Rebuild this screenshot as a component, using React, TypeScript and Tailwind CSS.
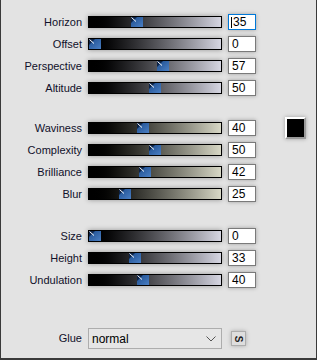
import React from "react";

type Row = { label: string; value: number };

const groupA: Row[] = [
  { label: "Horizon", value: 35 },
  { label: "Offset", value: 0 },
  { label: "Perspective", value: 57 },
  { label: "Altitude", value: 50 },
];

const groupB: Row[] = [
  { label: "Waviness", value: 40 },
  { label: "Complexity", value: 50 },
  { label: "Brilliance", value: 42 },
  { label: "Blur", value: 25 },
];

const groupC: Row[] = [
  { label: "Size", value: 0 },
  { label: "Height", value: 33 },
  { label: "Undulation", value: 40 },
];

function Thumb() {
  return (
    <svg width="12" height="10" viewBox="0 0 12 10" className="block">
      <defs>
        <linearGradient id="thumbFill" x1="0" y1="0" x2="1" y2="1">
          <stop offset="0" stopColor="#1d4c8c" />
          <stop offset="1" stopColor="#4a7fc4" />
        </linearGradient>
      </defs>
      <rect x="0" y="0" width="12" height="10" fill="url(#thumbFill)" />
      <polygon points="0,0 6,0 0,6" fill="#0c2347" />
      <line x1="0.5" y1="0.5" x2="5" y2="4.5" stroke="#ffffff" strokeWidth="1" />
    </svg>
  );
}

function Slider({ value, tone }: { value: number; tone: "blue" | "olive" }) {
  const left = Math.round((value / 100) * 120);
  return (
    <div
      className={
        tone === "blue"
          ? "relative h-[12px] w-[134px] border border-black bg-linear-to-r from-black to-[#d6d6e2] shadow-[0_0_5px_rgba(0,0,0,0.35)]"
          : "relative h-[12px] w-[134px] border border-black bg-linear-to-r from-black to-[#d8d8c6] shadow-[0_0_5px_rgba(0,0,0,0.35)]"
      }
    >
      <div className="absolute top-0" style={{ left }}>
        <Thumb />
      </div>
    </div>
  );
}

function NumberBox({ value, focused }: { value: number; focused?: boolean }) {
  return (
    <div
      className={
        focused
          ? "flex h-[16px] w-[28px] items-center border border-[#0078d7] bg-white pl-[2px] text-[12px] leading-none text-black shadow-[0_0_4px_rgba(0,0,0,0.3)]"
          : "flex h-[16px] w-[28px] items-center border border-[#7a7a7a] bg-white pl-[3px] text-[12px] leading-none text-black shadow-[0_0_4px_rgba(0,0,0,0.3)]"
      }
    >
      {focused && <span className="mr-px h-[11px] w-px bg-black" />}
      {value}
    </div>
  );
}

function SliderRow({ row, tone, focused, children }: { row: Row; tone: "blue" | "olive"; focused?: boolean; children?: React.ReactNode }) {
  return (
    <div className="flex h-[22px] items-center">
      <div className="w-[81px] text-right text-[11px] text-[#10102a]">{row.label}</div>
      <div className="ml-[6px]">
        <Slider value={row.value} tone={tone} />
      </div>
      <div className="ml-[6px]">
        <NumberBox value={row.value} focused={focused} />
      </div>
      {children}
    </div>
  );
}

export default function App() {
  return (
    <div
      className="h-[360px] w-[317px] border-x border-b-2 border-[#3a3a3a] bg-[#e3e3e3] pt-[11px]"
      style={{ fontFamily: '"Liberation Sans", Arial, sans-serif' }}
    >
      <div className="flex flex-col">
        {groupA.map((r, i) => (
          <SliderRow key={r.label} row={r} tone="blue" focused={i === 0} />
        ))}
      </div>

      <div className="mt-[18px] flex flex-col">
        {groupB.map((r, i) => (
          <SliderRow key={r.label} row={r} tone="olive">
            {i === 0 && (
              <div className="ml-[29px] h-[22px] w-[21px] border-2 border-t-white border-l-white border-r-[#9a9a9a] border-b-[#9a9a9a] shadow-[0_0_4px_rgba(0,0,0,0.3)]">
                <div className="h-full w-full bg-black" />
              </div>
            )}
          </SliderRow>
        ))}
      </div>

      <div className="mt-[20px] flex flex-col">
        {groupC.map((r) => (
          <SliderRow key={r.label} row={r} tone="blue" />
        ))}
      </div>

      <div className="mt-[37px] flex items-center">
        <div className="w-[81px] text-right text-[11px] text-[#10102a]">Glue</div>
        <div className="ml-[6px] flex h-[21px] w-[134px] items-center justify-between border border-[#adadad] bg-[#e6e6e6] pl-[3px] pr-[5px] text-[12px] text-black">
          <span>normal</span>
          <svg width="10" height="6" viewBox="0 0 10 6" className="block">
            <polyline points="0.5,0.5 5,5 9.5,0.5" fill="none" stroke="#555" strokeWidth="1" />
          </svg>
        </div>
        <div className="ml-[9px] flex h-[15px] w-[15px] items-center justify-center border border-[#adadad] bg-[#dedede] shadow-[0_0_4px_rgba(0,0,0,0.25)]">
          <span className="rotate-90 text-[10px] font-bold leading-none text-[#222]">S</span>
        </div>
      </div>
    </div>
  );
}
